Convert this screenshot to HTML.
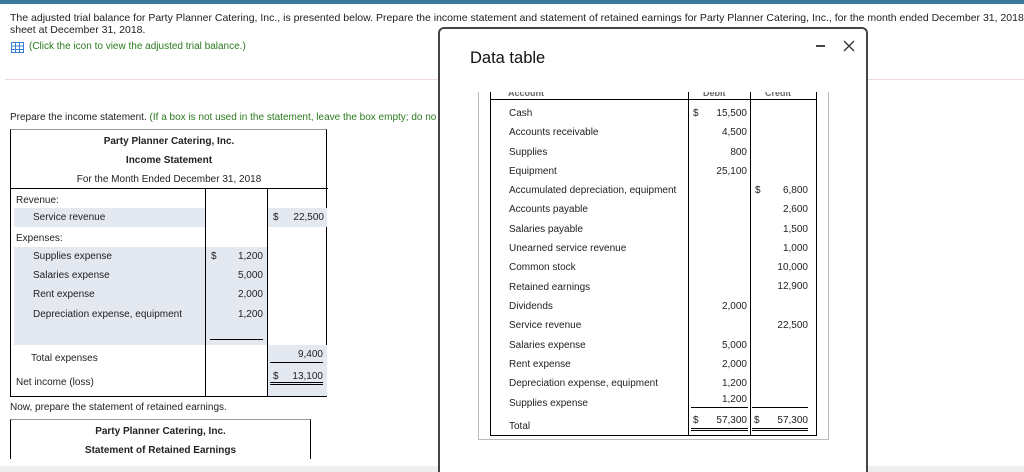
<!DOCTYPE html><html style="overflow:hidden;height:472px"><head><style>
body{margin:0;width:1024px;height:472px;overflow:hidden;background:#fff;font-family:"Liberation Sans",Arial,sans-serif;font-size:10px;color:#222;position:relative}
.a{position:absolute;white-space:nowrap}
.r{text-align:right}
.b{font-weight:bold}
.g{color:#2a7a1e}
.bl{position:absolute;background:#e3e8f1}
.l{position:absolute;background:#000}
</style></head><body>
<div class="a" style="left:0;top:0;width:1024px;height:4px;background:#3b7a99"></div>
<div class="a" style="left:10px;top:12px;font-size:10.5px">The adjusted trial balance for Party Planner Catering, Inc., is presented below. Prepare the income statement and statement of retained earnings for Party Planner Catering, Inc., for the month ended December 31, 2018. Also prep</div>
<div class="a" style="left:10px;top:24px;font-size:10.5px">sheet at December 31, 2018.</div>
<svg class="a" style="left:11px;top:42px" width="13" height="11"><rect x="0.5" y="0.5" width="12" height="10" fill="#fff" stroke="#3a7fd5"/><path d="M0 4H13M0 7.5H13M4.5 0V11M8.5 0V11" stroke="#3a7fd5"/></svg>
<div class="a g" style="left:29px;top:41px;font-size:10px">(Click the icon to view the adjusted trial balance.)</div>
<div class="a" style="left:5px;top:79px;width:1019px;height:1px;background:#ead8dc"></div>
<div class="a" style="left:10px;top:112px">Prepare the income statement. <span class="g">(If a box is not used in the statement, leave the box empty; do no</span></div>

<div class="a" style="left:10px;top:129px;width:317px;height:268px;border:1px solid #000;border-top-color:#999;box-sizing:border-box"></div>
<div class="a b" style="left:10px;top:136px;width:318px;text-align:center">Party Planner Catering, Inc.</div>
<div class="a b" style="left:10px;top:155px;width:318px;text-align:center">Income Statement</div>
<div class="a" style="left:10px;top:174px;width:318px;text-align:center">For the Month Ended December 31, 2018</div>
<div class="l" style="left:10px;top:188px;width:318px;height:1px"></div>
<div class="bl" style="left:14px;top:208px;width:191px;height:19px"></div>
<div class="bl" style="left:268px;top:208px;width:59px;height:19px"></div>
<div class="bl" style="left:14px;top:247px;width:253px;height:98px"></div>
<div class="bl" style="left:268px;top:345px;width:59px;height:51px"></div>
<div class="l" style="left:205px;top:188px;width:1px;height:209px"></div>
<div class="l" style="left:267px;top:188px;width:1px;height:209px"></div>
<div class="a" style="left:16px;top:195px">Revenue:</div>
<div class="a" style="left:33px;top:212px">Service revenue</div>
<div class="a" style="left:273px;top:212px">$</div><div class="a r" style="left:280px;top:212px;width:44px">22,500</div>
<div class="a" style="left:16px;top:233px">Expenses:</div>
<div class="a" style="left:33px;top:251px">Supplies expense</div>
<div class="a" style="left:33px;top:270px">Salaries expense</div>
<div class="a" style="left:33px;top:289px">Rent expense</div>
<div class="a" style="left:33px;top:309px">Depreciation expense, equipment</div>
<div class="a" style="left:211px;top:251px">$</div>
<div class="a r" style="left:215px;top:251px;width:48px">1,200</div>
<div class="a r" style="left:215px;top:270px;width:48px">5,000</div>
<div class="a r" style="left:215px;top:289px;width:48px">2,000</div>
<div class="a r" style="left:215px;top:309px;width:48px">1,200</div>
<div class="l" style="left:210px;top:339px;width:53px;height:1px"></div>
<div class="a" style="left:31px;top:353px">Total expenses</div>
<div class="a r" style="left:270px;top:349px;width:53px">9,400</div>
<div class="l" style="left:270px;top:362px;width:53px;height:1px"></div>
<div class="a" style="left:16px;top:377px">Net income (loss)</div>
<div class="a" style="left:273px;top:371px">$</div><div class="a r" style="left:280px;top:371px;width:43px">13,100</div>
<div class="l" style="left:270px;top:382px;width:53px;height:1px"></div>
<div class="l" style="left:270px;top:384px;width:53px;height:1px"></div>
<div class="a" style="left:10px;top:402px">Now, prepare the statement of retained earnings.</div>
<div class="a" style="left:10px;top:419px;width:301px;height:40px;border:1px solid #000;border-top-color:#999;border-bottom:none;box-sizing:border-box"></div>
<div class="a b" style="left:10px;top:426px;width:301px;text-align:center">Party Planner Catering, Inc.</div>
<div class="a b" style="left:10px;top:445px;width:301px;text-align:center">Statement of Retained Earnings</div>
<div class="a" style="left:0;top:466px;width:1024px;height:6px;background:#eeeeee"></div>

<div class="a" style="left:438px;top:27px;width:430px;height:460px;border:2px solid #444;border-radius:6px;background:#fff;box-sizing:border-box"></div>
<div class="a" style="left:470px;top:49px;font-size:16.5px;color:#111">Data table</div>
<div class="a" style="left:816px;top:45px;width:9px;height:2px;background:#444"></div>
<svg class="a" style="left:843px;top:40px" width="12" height="12"><path d="M1 1L11 11M11 1L1 11" stroke="#333" stroke-width="1.3"/></svg>
<div class="a" style="left:478px;top:92px;width:351px;height:348px;border:1px solid #bbb;border-top:none;box-sizing:border-box"></div>
<div class="a" style="left:490px;top:92px;width:327px;height:344px;border:1px solid #000;border-top:none;box-sizing:border-box"></div>
<div class="l" style="left:490px;top:99px;width:327px;height:1px"></div>
<div class="l" style="left:688px;top:92px;width:1px;height:344px"></div>
<div class="l" style="left:750px;top:92px;width:1px;height:344px"></div>
<div class="a b" style="left:508px;top:88px;font-size:9px;color:#666;clip-path:inset(4px 0 0 0)">Account</div>
<div class="a b" style="left:703px;top:88px;font-size:9px;color:#666;clip-path:inset(4px 0 0 0)">Debit</div>
<div class="a b" style="left:765px;top:88px;font-size:9px;color:#666;clip-path:inset(4px 0 0 0)">Credit</div>
<div class="a" style="left:509px;top:104px;line-height:19.3px">Cash<br>Accounts receivable<br>Supplies<br>Equipment<br>Accumulated depreciation, equipment<br>Accounts payable<br>Salaries payable<br>Unearned service revenue<br>Common stock<br>Retained earnings<br>Dividends<br>Service revenue<br>Salaries expense<br>Rent expense<br>Depreciation expense, equipment</div>
<div class="a" style="left:509px;top:398px">Supplies expense</div>
<div class="a" style="left:509px;top:421px">Total</div>
<div class="a" style="left:693px;top:108px">$</div>
<div class="a r" style="left:700px;top:104px;width:47px;line-height:19.3px">15,500<br>4,500<br>800<br>25,100<br>&nbsp;<br>&nbsp;<br>&nbsp;<br>&nbsp;<br>&nbsp;<br>&nbsp;<br>2,000<br>&nbsp;<br>5,000<br>2,000<br>1,200</div>
<div class="a r" style="left:700px;top:394px;width:47px">1,200</div>
<div class="a" style="left:755px;top:185px">$</div>
<div class="a r" style="left:760px;top:181px;width:48px;line-height:19.3px">6,800<br>2,600<br>1,500<br>1,000<br>10,000<br>12,900<br>&nbsp;<br>22,500</div>
<div class="l" style="left:691px;top:407px;width:57px;height:1px"></div>
<div class="l" style="left:752px;top:407px;width:56px;height:1px"></div>
<div class="a" style="left:693px;top:415px">$</div><div class="a r" style="left:700px;top:415px;width:47px">57,300</div>
<div class="a" style="left:754px;top:415px">$</div><div class="a r" style="left:760px;top:415px;width:48px">57,300</div>
<div class="l" style="left:691px;top:428px;width:57px;height:1px"></div><div class="l" style="left:691px;top:430px;width:57px;height:1px"></div>
<div class="l" style="left:752px;top:428px;width:56px;height:1px"></div><div class="l" style="left:752px;top:430px;width:56px;height:1px"></div>
</body></html>
